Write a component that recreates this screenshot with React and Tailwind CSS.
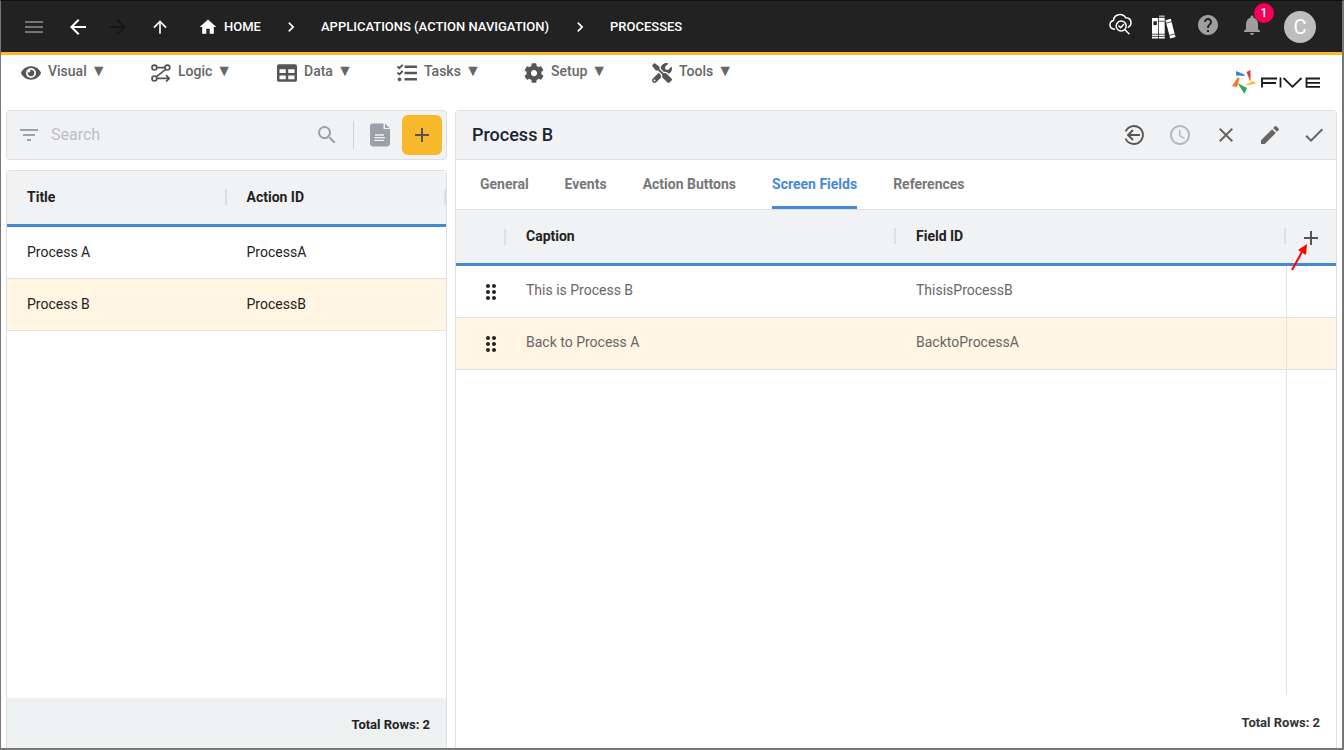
import {
  MdAccessTime,
  MdAdd,
  MdArrowBack,
  MdArrowForward,
  MdArrowUpward,
  MdCheck,
  MdChevronRight,
  MdClose,
  MdDragIndicator,
  MdEdit,
  MdFilterList,
  MdHelp,
  MdHome,
  MdMenu,
  MdNotifications,
  MdSearch,
} from 'react-icons/md';
import { FaCog, FaEye, FaTable, FaTasks, FaTools } from 'react-icons/fa';

function LogicIcon({ className }) {
  return (
    <svg viewBox="0 0 20 18" className={className} fill="none" stroke="currentColor" strokeWidth="1.7">
      <circle cx="3.4" cy="3.6" r="2.4" />
      <circle cx="16.4" cy="3.6" r="2.4" />
      <circle cx="3.4" cy="14.400" r="2.4" />
      <path d="M5.8 3.6H14M14.7 5.4 5.2 12.8M5.8 14.400H18M15 11.200l3.2 3.2L15 17.600" />
    </svg>
  );
}

function CloudSearchIcon() {
  return (
    <svg viewBox="0 0 24 24" className="h-6 w-6" fill="none" stroke="currentColor" strokeWidth="1.5" strokeLinecap="round">
      <path d="M6.500 16.200C3.800 16 2 14.200 2 11.800c0-2.200 1.500-3.900 3.500-4.300C5.500 4 8.500 1.400 12 1.400c2.600 0 4.700 1.300 5.800 3.400 3.200.1 5.200 2.200 5.200 5 0 1.900-1 3.500-2.600 4.300" />
      <circle cx="13.200" cy="13" r="5" />
      <path d="m10.900 13 1.700 1.700 3-3.200M17 16.800l4 4" />
    </svg>
  );
}

function BooksIcon() {
  return (
    <svg viewBox="0 0 25 25" className="h-6 w-6" fill="currentColor">
      <path d="M0 3h6.500v21.500H0zM13.200 3v21.500H7.300V3z" />
      <path d="M7.300.5h5.900v2H7.300z" fill="#aaa" />
      <path d="m14 5.500 5.500-1.500 5 19-5.500 1.500z" />
      <path d="M0 20h13.200M0 22.300h13.200M7.300 6.500h5.900M14.500 8.500l6-1.600M18 21.300l6-1.600" stroke="#222" strokeWidth="0.8" />
      <path d="M1.500 6.500h3.500v4H1.500z" fill="#222" />
    </svg>
  );
}

function DocIcon() {
  return (
    <svg viewBox="0 0 20 24" className="h-6 w-5" fill="currentColor">
      <path d="M3 .5h10.500v5.500H20V20.500a3 3 0 0 1-3 3H3a3 3 0 0 1-3-3V3.500a3 3 0 0 1 3-3z" />
      <path d="M15 .5 19.500 5H15z" />
      <path d="M5 12h9M4.500 14.700h10.500M4.500 17.400h9.500" stroke="#f1f2f4" strokeWidth="1.300" />
    </svg>
  );
}

function LeaveIcon() {
  return (
    <svg viewBox="0 0 24 24" className="h-6 w-6" fill="none" stroke="currentColor" strokeWidth="1.900">
      <path d="M3.600 8.500a9 9 0 1 1 0 7" />
      <path d="M18 12H6M11 7l-5 5 5 5" />
    </svg>
  );
}

function FiveLogo() {
  return (
    <svg viewBox="0 0 88 24" className="h-6 w-22" role="img" aria-label="Five">
      <path d="M4 1 12.500 4.500V6L4 5.500z" fill="#3f84d8" />
      <path d="M14.500 2 18.500 0 18.500 12z" fill="#e0393e" />
      <path d="M6 7 7.500 8.500 5 17 0 16z" fill="#f47b20" />
      <path d="M5.500 13 15 18l-2.500 6z" fill="#34a853" />
      <path d="M12 16 21 11l3 2.500z" fill="#fbbc1c" />
      <path
        d="M30 17.500V8.500h15M30 13h14M48.500 7.600v9.900M51.500 8l9 8.800 9-8.800M88 8.500H74.500v8.300H88M74.500 12.800H88"
        fill="none"
        stroke="#1a1a1a"
        strokeWidth="1.800"
      />
    </svg>
  );
}

const menus = [
  { label: 'Visual', Icon: FaEye },
  { label: 'Logic', Icon: LogicIcon },
  { label: 'Data', Icon: FaTable },
  { label: 'Tasks', Icon: FaTasks },
  { label: 'Setup', Icon: FaCog },
  { label: 'Tools', Icon: FaTools },
];

const processes = [
  { title: 'Process A', id: 'ProcessA' },
  { title: 'Process B', id: 'ProcessB', selected: true },
];

const fields = [
  { caption: 'This is Process B', id: 'ThisisProcessB' },
  { caption: 'Back to Process A', id: 'BacktoProcessA', selected: true },
];

function TopBar() {
  return (
    <header className="flex h-[54px] items-center border-b-3 border-[#fbb829] bg-[#222] pr-[26px] pl-[21px] text-white">
      <button aria-label="Menu" className="text-[#757575]"><MdMenu className="h-6 w-6" /></button>
      <button aria-label="Back" className="ml-5"><MdArrowBack className="h-6 w-6" /></button>
      <button aria-label="Forward" className="ml-4 text-[#161616]" disabled><MdArrowForward className="h-6 w-6" /></button>
      <button aria-label="Up" className="ml-5"><MdArrowUpward className="h-5 w-5" /></button>
      <nav aria-label="Breadcrumb" className="ml-7 flex items-center text-[13px] font-medium">
        <a href="#home" className="flex w-[83px] items-center gap-1.5"><MdHome className="h-5 w-5" />HOME</a>
        <MdChevronRight className="h-5 w-5" />
        <a href="#applications" className="ml-5 w-[249px]">APPLICATIONS (ACTION NAVIGATION)</a>
        <MdChevronRight className="h-5 w-5" />
        <a href="#processes" className="ml-5">PROCESSES</a>
      </nav>
      <div className="ml-auto flex items-center gap-5">
        <div className="flex items-center gap-5 pb-1">
          <button aria-label="Search docs"><CloudSearchIcon /></button>
          <button aria-label="Library" className="pt-1"><BooksIcon /></button>
          <button aria-label="Help" className="text-[#9e9e9e]"><MdHelp className="h-6 w-6" /></button>
          <button aria-label="Notifications" className="relative text-[#9e9e9e]">
            <MdNotifications className="h-6 w-6" />
            <span className="absolute -top-2.5 left-3.5 flex h-5 w-5 items-center justify-center rounded-full bg-[#f50057] text-xs font-medium text-white">1</span>
          </button>
        </div>
        <button className="h-8 w-8 rounded-full bg-[#bdbdbd] text-xl leading-8">C</button>
      </div>
    </header>
  );
}

function MenuBar() {
  return (
    <div className="flex h-[55px] justify-between pr-[22px] pl-5">
      <nav className="grid h-8 grid-cols-[130px_126px_120px_127px_128px_auto] items-center pt-1">
        {menus.map(({ label, Icon }) => (
          <button key={label} className="flex h-6 items-center gap-[7px] text-sm font-medium text-[#666]">
            <Icon className="h-5 w-5 text-[#555]" />
            <span className="flex items-center gap-1 pb-1">{label} <span className="text-base">▼</span></span>
          </button>
        ))}
      </nav>
      <div className="pt-[15px]"><FiveLogo /></div>
    </div>
  );
}

function ProcessList() {
  return (
    <section className="flex w-[441px] shrink-0 flex-col">
      <div className="flex h-[50px] shrink-0 items-center rounded border border-[#dedfe1] bg-[#f1f2f4] pr-1 pl-2.5 text-[#9aa1a8]">
        <button aria-label="Filter"><MdFilterList className="h-6 w-6" /></button>
        <input aria-label="Search" placeholder="Search" className="ml-2.5 min-w-0 flex-1 outline-none placeholder:text-[#bdc0c3]" />
        <button aria-label="Run search"><MdSearch className="h-6 w-6" /></button>
        <div className="ml-3.5 h-7 border-l border-[#cfd2d5]" />
        <button aria-label="Report" className="ml-4"><DocIcon /></button>
        <button aria-label="Add process" className="ml-3 flex h-10 w-10 items-center justify-center rounded-md bg-[#f8b82b] text-[#555]">
          <MdAdd className="h-6 w-6" />
        </button>
      </div>
      <div className="mt-2.5 flex flex-1 flex-col rounded-t border border-b-0 border-[#dedfe1]">
        <table className="w-full table-fixed border-separate border-spacing-0 text-left text-sm text-[#222]">
          <thead>
            <tr className="h-14 bg-[#f1f2f4]">
              <th className="border-b-3 border-[#4688d8] pb-0.5 pl-5 font-bold">
                <div className="border-r-2 border-[#dedfe1] leading-4">Title</div>
              </th>
              <th className="border-b-3 border-[#4688d8] pb-0.5 pl-5 font-bold">
                <div className="border-r-2 border-[#dedfe1] leading-4">Action ID</div>
              </th>
            </tr>
          </thead>
          <tbody>
            {processes.map((p) => (
              <tr key={p.id} className={p.selected ? 'h-[52px] bg-[#fff5e2]' : 'h-[52px]'}>
                <td className="border-b border-[#e2e2e2] pb-0.5 pl-5">{p.title}</td>
                <td className="border-b border-[#e2e2e2] pb-0.5 pl-5">{p.id}</td>
              </tr>
            ))}
          </tbody>
        </table>
        <div className="mt-auto flex h-[50px] items-center justify-end bg-[#eef1f2] pt-1 pr-4 text-[13px] font-bold text-[#222]">Total Rows: 2</div>
      </div>
    </section>
  );
}

function Tabs() {
  return (
    <nav className="flex h-[49px] items-stretch gap-9 px-6 text-sm font-bold text-[#777]">
      <button className="pb-0.5">General</button>
      <button className="pb-0.5">Events</button>
      <button className="pb-0.5">Action Buttons</button>
      <button className="border-y-3 border-t-transparent border-b-[#4688d8] pb-0.5 text-[#4688d8]">Screen Fields</button>
      <button className="pb-0.5">References</button>
    </nav>
  );
}

function ProcessDetail() {
  return (
    <section className="flex min-w-0 flex-1 flex-col rounded-t border border-b-0 border-[#dedfe1]">
      <div className="flex h-[49px] shrink-0 items-center border-b border-[#dedfe1] bg-[#f1f2f4] pr-2.5 pl-4 text-[#666]">
        <h1 className="flex-1 text-lg font-medium text-[#1b2434]">Process B</h1>
        <div className="flex items-center gap-5">
          <div className="flex items-center gap-[22px]">
            <button aria-label="Leave" className="text-[#555]"><LeaveIcon /></button>
            <button aria-label="History" className="text-[#b8b9bb]" disabled><MdAccessTime className="h-6 w-6" /></button>
            <button aria-label="Cancel"><MdClose className="h-6 w-6" /></button>
          </div>
          <button aria-label="Edit"><MdEdit className="h-6 w-6" /></button>
          <button aria-label="Save"><MdCheck className="h-6 w-6" /></button>
        </div>
      </div>
      <Tabs />
      <div className="flex flex-1 flex-col">
        <table className="w-full table-fixed border-separate border-spacing-0 text-left text-sm">
          <thead>
            <tr className="h-[57px] bg-[#f1f2f4] text-[#222]">
              <th className="w-[50px] border-t border-b-3 border-t-[#dedfe1] border-b-[#4688d8]">
                <div className="h-4 border-r-2 border-[#dedfe1]" />
              </th>
              <th className="border-t border-b-3 border-t-[#dedfe1] border-b-[#4688d8] pb-0.5 pl-5 font-bold">
                <div className="border-r-2 border-[#dedfe1] leading-4">Caption</div>
              </th>
              <th className="border-t border-b-3 border-t-[#dedfe1] border-b-[#4688d8] pb-0.5 pl-5 font-bold">
                <div className="border-r-2 border-[#dedfe1] leading-4">Field ID</div>
              </th>
              <th className="w-[50px] border-t border-b-3 border-t-[#dedfe1] border-b-[#4688d8]">
                <div className="relative flex justify-center pt-0.5">
                  <button aria-label="Add field" className="text-[#555]"><MdAdd className="h-6 w-6" /></button>
                  <svg viewBox="0 0 20 32" className="absolute top-4 left-1 h-8 w-5">
                    <path d="M2 30 12 12" stroke="#f00" strokeWidth="2" />
                    <path d="M17 4 8 10l8 5z" fill="#f00" />
                  </svg>
                </div>
              </th>
            </tr>
          </thead>
          <tbody className="text-[#666]">
            {fields.map((f) => (
              <tr key={f.id} className={f.selected ? 'h-[52px] bg-[#fff5e2]' : 'h-[52px]'}>
                <td className="border-b border-[#e2e2e2] pl-[23px] text-[#222]"><MdDragIndicator className="h-6 w-6" /></td>
                <td className="border-b border-[#e2e2e2] pb-1 pl-5">{f.caption}</td>
                <td className="border-b border-[#e2e2e2] pb-1 pl-5">{f.id}</td>
                <td className="border-b border-l border-[#e2e2e2]" />
              </tr>
            ))}
          </tbody>
        </table>
        <div className="flex flex-1 justify-end"><div className="w-[50px] border-l border-[#e2e2e2]" /></div>
        <div className="flex h-[53px] items-center justify-end pt-0.5 pr-4 text-[13px] font-bold text-[#333]">Total Rows: 2</div>
      </div>
    </section>
  );
}

export default function App() {
  return (
    <div className="flex min-h-screen flex-col border-t border-r-2 border-b-2 border-l border-[#777] border-t-[#111] bg-white font-[Roboto,sans-serif]">
      <TopBar />
      <MenuBar />
      <main className="flex flex-1 gap-2 px-[5px]">
        <ProcessList />
        <ProcessDetail />
      </main>
    </div>
  );
}
